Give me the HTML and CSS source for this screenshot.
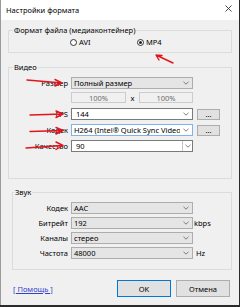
FILE: index.html
```html
<!DOCTYPE html>
<html>
<head>
  <meta charset="UTF-8">
  <title>Настройки формата</title>
  <link rel="stylesheet" href="styles.css">
</head>
<body>
  <div class="window">
    <div class="titlebar">
      <span class="title">Настройки формата</span>
      <svg class="close" width="7" height="7" viewBox="0 0 7 7"><path d="M0.5 0.5 L6.5 6.5 M6.5 0.5 L0.5 6.5" stroke="#333" stroke-width="0.9" fill="none"/></svg>
    </div>

    <div class="dialog">
      <fieldset class="group group-format">
        <legend>Формат файла (медиаконтейнер)</legend>
        <div class="radio-row">
          <label class="radio"><span class="dot"></span>AVI</label>
          <label class="radio checked"><span class="dot"></span>MP4</label>
        </div>
      </fieldset>

      <fieldset class="group group-video">
        <legend>Видео</legend>
        <div class="row">
          <span class="label">Размер</span>
          <div class="combo list">Полный размер<svg class="chev" width="6" height="4" viewBox="0 0 6 4"><path d="M0.5 0.8 L3 3.2 L5.5 0.8" stroke="#606060" stroke-width="0.8" fill="none"/></svg></div>
        </div>
        <div class="row size-row">
          <span class="label"></span>
          <div class="edit disabled first">100%</div>
          <span class="times">x</span>
          <div class="edit disabled">100%</div>
        </div>
        <div class="row">
          <span class="label">FPS</span>
          <div class="combo edit-combo">144<svg class="chev" width="6" height="4" viewBox="0 0 6 4"><path d="M0.5 0.8 L3 3.2 L5.5 0.8" stroke="#606060" stroke-width="0.8" fill="none"/></svg></div>
          <button class="more">...</button>
        </div>
        <div class="row">
          <span class="label">Кодек</span>
          <div class="combo focused"><span class="value">H264 (Intel® Quick Sync Video)</span><svg class="chev" width="6" height="4" viewBox="0 0 6 4"><path d="M0.5 0.8 L3 3.2 L5.5 0.8" stroke="#606060" stroke-width="0.8" fill="none"/></svg></div>
          <button class="more">...</button>
        </div>
        <div class="row">
          <span class="label">Качество</span>
          <div class="combo edit-combo split">90<span class="drop"><svg width="6" height="4" viewBox="0 0 6 4"><path d="M0.5 0.8 L3 3.2 L5.5 0.8" stroke="#606060" stroke-width="0.8" fill="none"/></svg></span></div>
        </div>
      </fieldset>

      <fieldset class="group group-audio">
        <legend>Звук</legend>
        <div class="row">
          <span class="label">Кодек</span>
          <div class="combo list">AAC<svg class="chev" width="6" height="4" viewBox="0 0 6 4"><path d="M0.5 0.8 L3 3.2 L5.5 0.8" stroke="#606060" stroke-width="0.8" fill="none"/></svg></div>
        </div>
        <div class="row">
          <span class="label">Битрейт</span>
          <div class="combo list">192<svg class="chev" width="6" height="4" viewBox="0 0 6 4"><path d="M0.5 0.8 L3 3.2 L5.5 0.8" stroke="#606060" stroke-width="0.8" fill="none"/></svg></div>
          <span class="unit">kbps</span>
        </div>
        <div class="row">
          <span class="label">Каналы</span>
          <div class="combo list">стерео<svg class="chev" width="6" height="4" viewBox="0 0 6 4"><path d="M0.5 0.8 L3 3.2 L5.5 0.8" stroke="#606060" stroke-width="0.8" fill="none"/></svg></div>
        </div>
        <div class="row">
          <span class="label">Частота</span>
          <div class="combo list">48000<svg class="chev" width="6" height="4" viewBox="0 0 6 4"><path d="M0.5 0.8 L3 3.2 L5.5 0.8" stroke="#606060" stroke-width="0.8" fill="none"/></svg></div>
          <span class="unit hz">Hz</span>
        </div>
      </fieldset>

      <div class="footer">
        <a class="help" href="#">[ Помощь ]</a>
        <div class="buttons">
          <button class="btn default">OK</button>
          <button class="btn">Отмена</button>
        </div>
      </div>
    </div>
  </div>

  <svg class="marks" width="240" height="307" viewBox="0 0 240 307">
    <g stroke="#e3141c" stroke-width="1.4" fill="none" stroke-linecap="round">
      <path d="M173 63 L156 55 M156 55 L162 55.5 M156 55 L159 60"/>
      <path d="M27 80 L62 83 M62 83 L55 79.5 M62 83 L55 86"/>
      <path d="M30 115 L63 114 M63 114 L56 111 M63 114 L56 117.5"/>
      <path d="M30 131.5 L63 130.5 M63 130.5 L56 127.5 M63 130.5 L56 134"/>
      <path d="M26 148 L63 145.5 M63 145.5 L56 142 M63 145.5 L56 149.5"/>
    </g>
  </svg>
</body>
</html>
```

FILE: styles.css
```css
* {
  box-sizing: border-box;
}
html, body {
  margin: 0;
}
body {
  position: relative;
  width: 240px;
  height: 307px;
  overflow: hidden;
  background-color: #2b2b2b;
  font-family: "Noto Sans", sans-serif;
  font-size: 7.5px;
  line-height: 10px;
  color: #000;
}
.window {
  width: 239px;
  height: 305px;
  background-color: #f0f0f0;
  border-left: 1px solid #9a9a9a;
  display: flex;
  flex-direction: column;
}
.titlebar {
  height: 20px;
  background-color: #fff;
  display: flex;
  align-items: center;
  justify-content: space-between;
  padding: 0 7px 0 5px;
}
.close {
  margin-bottom: 3px;
}
.dialog {
  padding: 0 7px;
  display: flex;
  flex-direction: column;
}
.group {
  margin: 0;
  padding: 0;
  border: 1px solid #dcdcdc;
  min-width: 0;
}
.group legend {
  margin-left: 4px;
  padding: 0 1px;
  height: 10px;
  line-height: 10px;
}
.group-format {
  margin-top: 5px;
  padding: 2px 0 5px;
}
.radio-row {
  display: flex;
  height: 10px;
  align-items: center;
  padding-left: 61px;
}
.radio {
  display: flex;
  align-items: center;
  width: 67px;
}
.dot {
  width: 7px;
  height: 7px;
  margin-right: 2px;
  border: 1px solid #333;
  border-radius: 50%;
  background-color: #fff;
  display: flex;
  align-items: center;
  justify-content: center;
}
.checked .dot::after {
  content: "";
  width: 3px;
  height: 3px;
  border-radius: 50%;
  background-color: #222;
}
.group-video {
  margin-top: 9px;
  padding: 5px 0 26px;
}
.group-audio {
  margin-top: 8px;
  margin-left: 4px;
  padding: 5px 0 10px;
}
.group-audio legend {
  margin-left: 1px;
}
.row {
  display: flex;
  align-items: center;
  height: 12px;
}
.group-video .row + .row {
  margin-top: 4px;
}
.group-video .size-row {
  margin-top: 3px !important;
  height: 11px;
}
.group-video .size-row + .row {
  margin-top: 5px;
}
.group-audio .row + .row {
  margin-top: 3px;
}
.label {
  flex: none;
  text-align: right;
  margin-right: 3px;
}
.group-video .label {
  width: 59px;
}
.group-audio .label {
  width: 55px;
}
.combo {
  position: relative;
  width: 122px;
  height: 12px;
  display: flex;
  align-items: center;
  padding: 0 12px 0 2px;
  border: 1px solid #adadad;
  background-color: #e5e5e5;
  white-space: nowrap;
  overflow: hidden;
}
.combo .chev {
  position: absolute;
  right: 3px;
  top: 3px;
}
.edit-combo {
  background-color: #fff;
  border-color: #7a7a7a;
  padding-left: 4px;
}
.focused {
  background-color: #fff;
  border-color: #7eb4ea;
}
.focused .value {
  overflow: hidden;
  width: 106px;
}
.split .drop {
  position: absolute;
  right: 0;
  top: 0;
  width: 10px;
  height: 10px;
  border-left: 1px solid #c8c8c8;
  display: flex;
  align-items: center;
  justify-content: center;
}
.edit {
  height: 11px;
  display: flex;
  align-items: center;
  justify-content: center;
  border: 1px solid #cccccc;
  background-color: #f0f0f0;
  color: #6d6d6d;
}
.edit.first {
  width: 55px;
}
.edit:last-child {
  width: 54px;
}
.times {
  width: 13px;
  text-align: center;
}
button {
  font-family: inherit;
  font-size: inherit;
  line-height: 10px;
  color: #000;
  padding: 0;
  margin: 0;
  border: 1px solid #adadad;
  background-color: #e1e1e1;
}
.more {
  width: 23px;
  height: 11px;
  margin-left: 4px;
  line-height: 6px;
}
.unit {
  margin-left: 1px;
}
.unit.hz {
  margin-left: 3px;
}
.footer {
  margin-top: 10px;
  height: 17px;
  display: flex;
  align-items: center;
  justify-content: space-between;
  padding: 0 2px 0 5px;
}
.help {
  color: #3340cc;
  text-decoration: underline;
}
.buttons {
  display: flex;
  gap: 5px;
}
.btn {
  width: 54px;
  height: 17px;
}
.btn.default {
  border-color: #0078d7;
}
.marks {
  position: absolute;
  left: 0;
  top: 0;
  pointer-events: none;
}
```
